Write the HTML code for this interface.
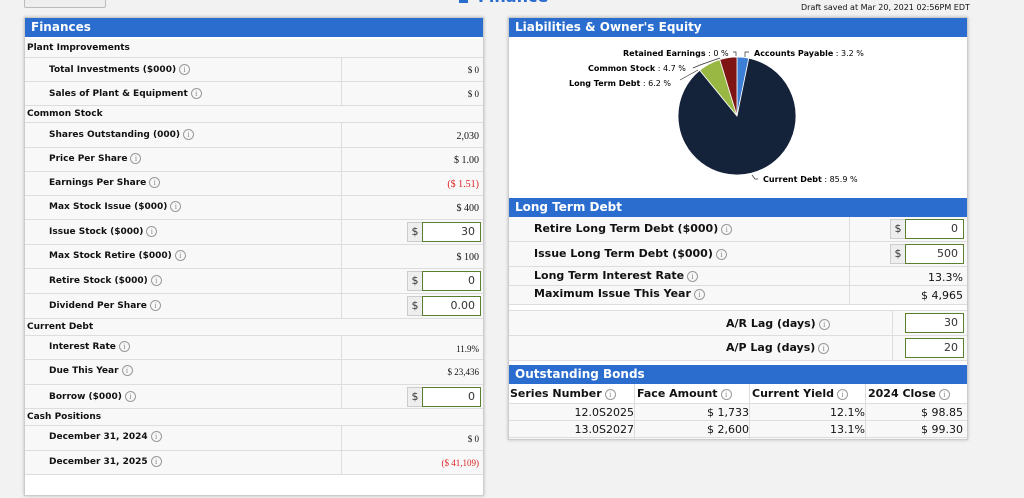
<!DOCTYPE html>
<html><head><meta charset="utf-8"><style>
*{box-sizing:border-box;margin:0;padding:0}
body{width:1024px;height:498px;background:#f2f2f2;font-family:"DejaVu Sans","Liberation Sans",sans-serif;position:relative;overflow:hidden;color:#111}
.abs{position:absolute}
.hdr{background:#2a6dcf;color:#fff;font-weight:bold;font-size:12px;padding-left:6px;line-height:19px}
.panel{background:#fff;border:1px solid #ccc;box-shadow:0 0 3px #bbb}
.row{position:absolute;left:0;right:0;border-bottom:1px solid #ddd;background:#f8f8f8}
.lab{position:absolute;font-weight:bold;font-size:9px;white-space:nowrap}
.val{position:absolute;right:4px;font-family:"Liberation Serif",serif;font-size:10px}
.i{display:inline-block;width:11px;height:11px;border:1px solid #999;border-radius:50%;font-size:8px;line-height:9px;text-align:center;color:#888;font-weight:normal;vertical-align:middle;margin-left:3px;font-family:"Liberation Serif",serif}
.div{position:absolute;top:0;bottom:0;width:1px;background:#ddd}
.addon{position:absolute;width:16px;height:20px;background:#eee;border:1px solid #ccc;font-size:11px;text-align:center;line-height:18px;color:#333}
.inp{position:absolute;height:20px;background:#fff;border:1px solid #5a7f2f;font-size:11px;text-align:right;padding-right:5px;line-height:18px;color:#333}
.rl{position:absolute;font-weight:bold;font-size:11px;white-space:nowrap}
.rv{position:absolute;right:4px;font-size:11px}
</style></head><body>
<div class="abs" style="left:24px;top:-4px;width:82px;height:12px;background:#eee;border:1px solid #bbb;border-radius:2px"></div>
<div class="abs" style="left:459px;top:-3px;width:9px;height:6px;background:#2a6dcf"></div>
<div class="abs" style="left:478px;top:-13px;font-weight:bold;color:#2a6dcf;font-size:16px">Finance</div>
<div class="abs" style="left:801px;top:3px;font-size:8px">Draft saved at Mar 20, 2021 02:56PM EDT</div>

<!-- LEFT PANEL -->
<div class="abs panel" style="left:24px;top:17px;width:460px;height:479px">
<div class="hdr">Finances</div>
<div class="abs" style="left:0;right:0;top:19px;height:455px">
<div class="row" style="top:2px;height:19px"><div class="lab" style="left:2px;top:4px">Plant Improvements</div></div>
<div class="row" style="top:21px;height:24px"><div class="lab" style="left:24px;top:6px">Total Investments ($000)<span class="i">i</span></div><div class="div" style="left:316px"></div><div class="val" style="top:7px;font-size:9px">$ 0</div></div>
<div class="row" style="top:45px;height:24px"><div class="lab" style="left:24px;top:6px">Sales of Plant &amp; Equipment<span class="i">i</span></div><div class="div" style="left:316px"></div><div class="val" style="top:7px;font-size:9px">$ 0</div></div>
<div class="row" style="top:69px;height:17px"><div class="lab" style="left:2px;top:3px">Common Stock</div></div>
<div class="row" style="top:86px;height:25px"><div class="lab" style="left:24px;top:6px">Shares Outstanding (000)<span class="i">i</span></div><div class="div" style="left:316px"></div><div class="val" style="top:8px">2,030</div></div>
<div class="row" style="top:111px;height:24px"><div class="lab" style="left:24px;top:5px">Price Per Share<span class="i">i</span></div><div class="div" style="left:316px"></div><div class="val" style="top:7px">$ 1.00</div></div>
<div class="row" style="top:135px;height:24px"><div class="lab" style="left:24px;top:5px">Earnings Per Share<span class="i">i</span></div><div class="div" style="left:316px"></div><div class="val" style="top:7px;color:#d22">($ 1.51)</div></div>
<div class="row" style="top:159px;height:24px"><div class="lab" style="left:24px;top:5px">Max Stock Issue ($000)<span class="i">i</span></div><div class="div" style="left:316px"></div><div class="val" style="top:7px">$ 400</div></div>
<div class="row" style="top:183px;height:25px"><div class="lab" style="left:24px;top:6px">Issue Stock ($000)<span class="i">i</span></div><div class="div" style="left:316px"></div><div class="addon" style="left:382px;top:2px">$</div><div class="inp" style="left:397px;top:2px;width:59px">30</div></div>
<div class="row" style="top:208px;height:24px"><div class="lab" style="left:24px;top:5px">Max Stock Retire ($000)<span class="i">i</span></div><div class="div" style="left:316px"></div><div class="val" style="top:7px">$ 100</div></div>
<div class="row" style="top:232px;height:25px"><div class="lab" style="left:24px;top:6px">Retire Stock ($000)<span class="i">i</span></div><div class="div" style="left:316px"></div><div class="addon" style="left:382px;top:2px">$</div><div class="inp" style="left:397px;top:2px;width:59px">0</div></div>
<div class="row" style="top:257px;height:25px"><div class="lab" style="left:24px;top:6px">Dividend Per Share<span class="i">i</span></div><div class="div" style="left:316px"></div><div class="addon" style="left:382px;top:2px">$</div><div class="inp" style="left:397px;top:2px;width:59px">0.00</div></div>
<div class="row" style="top:282px;height:17px"><div class="lab" style="left:2px;top:3px">Current Debt</div></div>
<div class="row" style="top:299px;height:24px"><div class="lab" style="left:24px;top:5px">Interest Rate<span class="i">i</span></div><div class="div" style="left:316px"></div><div class="val" style="top:8px;font-size:9px">11.9%</div></div>
<div class="row" style="top:323px;height:25px"><div class="lab" style="left:24px;top:5px">Due This Year<span class="i">i</span></div><div class="div" style="left:316px"></div><div class="val" style="top:7px;font-size:9px">$ 23,436</div></div>
<div class="row" style="top:348px;height:24px"><div class="lab" style="left:24px;top:6px">Borrow ($000)<span class="i">i</span></div><div class="div" style="left:316px"></div><div class="addon" style="left:382px;top:2px">$</div><div class="inp" style="left:397px;top:2px;width:59px">0</div></div>
<div class="row" style="top:372px;height:17px"><div class="lab" style="left:2px;top:3px">Cash Positions</div></div>
<div class="row" style="top:389px;height:25px"><div class="lab" style="left:24px;top:5px">December 31, 2024<span class="i">i</span></div><div class="div" style="left:316px"></div><div class="val" style="top:8px;font-size:9px">$ 0</div></div>
<div class="row" style="top:414px;height:24px"><div class="lab" style="left:24px;top:5px">December 31, 2025<span class="i">i</span></div><div class="div" style="left:316px"></div><div class="val" style="top:7px;font-size:9px;color:#d22">($ 41,109)</div></div>
</div>
</div>

<!-- RIGHT PANEL -->
<div class="abs panel" style="left:508px;top:17px;width:460px;height:423px;background:#fff">
<div class="hdr">Liabilities &amp; Owner's Equity</div>
</div>
<svg class="abs" style="left:0;top:0" width="1024" height="200" font-family="DejaVu Sans,sans-serif" font-size="8">
<path d="M737 116 L737 57 A59 59 0 0 1 748.8 58.2Z" fill="#3d7fd6" stroke="#fff" stroke-width="0.8"/>
<path d="M737 116 L748.8 58.2 A59 59 0 1 1 699.7 70.3Z" fill="#14223a" stroke="#fff" stroke-width="0.8"/>
<path d="M737 116 L699.7 70.3 A59 59 0 0 1 719.8 59.6Z" fill="#98b843" stroke="#fff" stroke-width="0.8"/>
<path d="M737 116 L719.8 59.6 A59 59 0 0 1 737 57Z" fill="#7f1414" stroke="#fff" stroke-width="0.8"/>
<g fill="none" stroke="#333" stroke-width="0.7">
<path d="M745 57 L745 52 L749 52"/><path d="M736 56 L736 52 L733 52"/>
<path d="M720 58 L700 65 L693 68"/><path d="M698 70 L680 80"/><path d="M752 175 L755 179 L758 179"/>
</g>
<text x="623" y="56"><tspan font-weight="bold">Retained Earnings</tspan> : 0 %</text>
<text x="754" y="56"><tspan font-weight="bold">Accounts Payable</tspan> : 3.2 %</text>
<text x="588" y="71"><tspan font-weight="bold">Common Stock</tspan> : 4.7 %</text>
<text x="569" y="86"><tspan font-weight="bold">Long Term Debt</tspan> : 6.2 %</text>
<text x="763" y="182"><tspan font-weight="bold">Current Debt</tspan> : 85.9 %</text>
</svg>

<div class="abs" style="left:509px;top:198px;width:458px">
<div class="hdr">Long Term Debt</div>
<div class="abs" style="left:0;right:0;top:19px;height:88px;background:#f8f8f8">
<div class="row" style="top:0;height:25px"><div class="rl" style="left:25px;top:5px">Retire Long Term Debt ($000)<span class="i">i</span></div><div class="div" style="left:340px"></div><div class="addon" style="left:381px;top:2px">$</div><div class="inp" style="left:396px;top:2px;width:59px">0</div></div>
<div class="row" style="top:25px;height:25px"><div class="rl" style="left:25px;top:5px">Issue Long Term Debt ($000)<span class="i">i</span></div><div class="div" style="left:340px"></div><div class="addon" style="left:381px;top:2px">$</div><div class="inp" style="left:396px;top:2px;width:59px">500</div></div>
<div class="row" style="top:50px;height:19px"><div class="rl" style="left:25px;top:2px">Long Term Interest Rate<span class="i">i</span></div><div class="div" style="left:340px"></div><div class="rv" style="top:4px">13.3%</div></div>
<div class="row" style="top:69px;height:19px"><div class="rl" style="left:25px;top:1px">Maximum Issue This Year<span class="i">i</span></div><div class="div" style="left:340px"></div><div class="rv" style="top:3px">$ 4,965</div></div>
</div>
</div>
<div class="abs" style="left:509px;top:310px;width:458px;height:50px;background:#f8f8f8;border-top:1px solid #ddd">
<div class="row" style="top:0;height:25px"><div class="rl" style="left:217px;top:6px">A/R Lag (days)<span class="i">i</span></div><div class="div" style="left:383px"></div><div class="inp" style="left:396px;top:2px;width:59px">30</div></div>
<div class="row" style="top:25px;height:25px"><div class="rl" style="left:217px;top:5px">A/P Lag (days)<span class="i">i</span></div><div class="div" style="left:383px"></div><div class="inp" style="left:396px;top:2px;width:59px">20</div></div>
</div>
<div class="abs" style="left:509px;top:365px;width:458px">
<div class="hdr">Outstanding Bonds</div>
<div class="abs" style="left:0;right:0;top:19px;height:55px;background:#f8f8f8">
<div class="row" style="top:0;height:20px;background:#fff"></div>
<div class="row" style="top:20px;height:17px"></div>
<div class="row" style="top:37px;height:17px"></div>
<div class="div" style="left:125px"></div><div class="div" style="left:240px"></div><div class="div" style="left:356px"></div>
<div class="rl" style="left:1px;top:3px">Series Number<span class="i">i</span></div>
<div class="rl" style="left:128px;top:3px">Face Amount<span class="i">i</span></div>
<div class="rl" style="left:243px;top:3px">Current Yield<span class="i">i</span></div>
<div class="rl" style="left:359px;top:3px">2024 Close<span class="i">i</span></div>
<div class="rv" style="right:333px;top:22px">12.0S2025</div><div class="rv" style="right:218px;top:22px">$ 1,733</div><div class="rv" style="right:102px;top:22px">12.1%</div><div class="rv" style="top:22px">$ 98.85</div>
<div class="rv" style="right:333px;top:39px">13.0S2027</div><div class="rv" style="right:218px;top:39px">$ 2,600</div><div class="rv" style="right:102px;top:39px">13.1%</div><div class="rv" style="top:39px">$ 99.30</div>
</div>
</div>
</body></html>
